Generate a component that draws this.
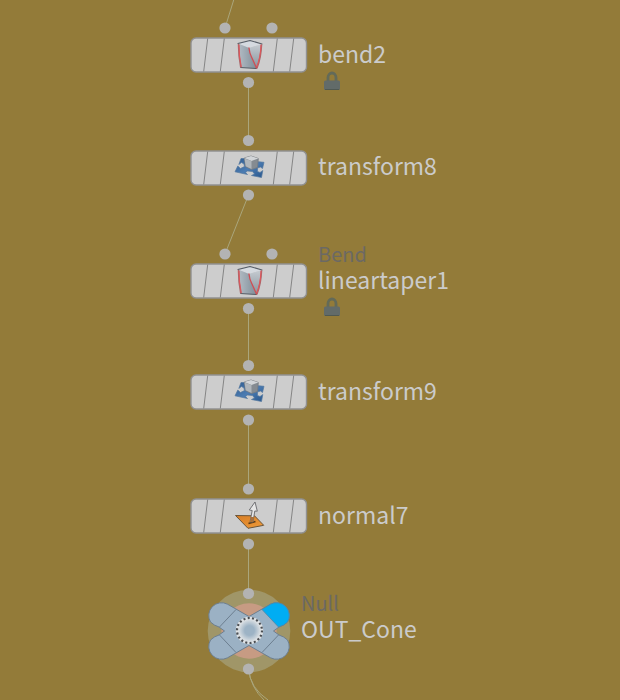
const wire = "#aaa67c";

function Lock() {
  return (
    <svg className="ml-[6px] block h-[20px] w-[16px]" viewBox="0 0 16 20" role="img" aria-label="locked">
      <path d="M4 11V6.500a4 4.500 0 0 1 8 0V11" fill="none" stroke="#636a58" strokeWidth="2.800" />
      <rect x="0" y="9.500" width="16" height="9.500" rx="1.500" fill="#626b69" />
      <path d="M1 18.500h14" stroke="#505952" />
    </svg>
  );
}

function BendIcon() {
  return (
    <g strokeLinejoin="round" strokeLinecap="round">
      <path d="M48 6.500L60 3.500L72 7L59 11Z" fill="#d5dae0" />
      <path d="M48 6.500L59 11L66.500 31.500L50.500 30.500Q48.500 18 48 6.500Z" fill="url(#bendLeft)" />
      <path d="M59 11L72 7Q71 22 66.500 31.500Q60 20 59 11Z" fill="url(#bendRight)" />
      <path d="M48 6.500L60 3.500L72 7M50.500 30.500L66.500 31.500" fill="none" stroke="#565d66" strokeWidth="1.100" />
      <path d="M48.500 7.500Q48.500 19 50.700 30" fill="none" stroke="#a8686c" strokeWidth="1.500" />
      <path d="M49 8Q49 19 51.200 29.500" fill="none" stroke="#e0565a" strokeWidth="1.100" />
      <path d="M71.500 8Q71 21 67 31" fill="none" stroke="#a8686c" strokeWidth="1.500" />
      <path d="M71 8Q70.500 21 66.500 30.500" fill="none" stroke="#e0565a" strokeWidth="1.100" />
      <path d="M59 11Q59.500 16 61.500 20L66.500 31" fill="none" stroke="#cf4d53" strokeWidth="1.300" />
    </g>
  );
}

function TransformIcon() {
  return (
    <g strokeLinejoin="round">
      <path
        d="M51 8.500L57 8.500L57 13L65 14L66 11.500L74 12.300L72.500 18.500L70.500 17L67.500 18L67.500 21.500L70 22.500L72.800 20.500L71.500 27.500L61.500 25.500L64.500 24L62.500 21.500L57.500 21L55.500 22.500L57.500 24.500L45 21.800L47.800 16L50.500 18.500L54.500 16.500L54 14L51.500 12.500L48.800 14.500Z"
        fill="url(#plate)"
        stroke="#55799f"
        strokeWidth="0.700"
      />
      <path d="M54.300 8L61 6L68.300 8.500L67.500 17.500L61.500 19.500L55.500 16.500Z" fill="#858b91" stroke="#767b80" strokeWidth="0.800" />
      <path d="M54.300 8L61 6L68.300 8.500L61.500 11Z" fill="#d2d5d8" />
      <path d="M54.500 8.500L61.500 11L61.500 19L55.700 16.200Z" fill="#b0b6bb" />
    </g>
  );
}

function NormalIcon() {
  return (
    <g strokeLinejoin="round">
      <path d="M45.500 17.500L64.500 17.800L73.700 27.300L58 30.300Z" fill="url(#orange)" stroke="#6b553a" strokeWidth="1" />
      <path d="M58.500 25.500L65.500 23.500" stroke="#5d3b14" strokeWidth="1.800" />
      <path d="M60 24L62.200 12.500L59.300 12L65 4L67.300 13.200L64.800 13L63 24Z" fill="#e6e6e6" stroke="#66676a" strokeWidth="0.900" />
      <path d="M60 24L60.800 19L64 19L63 24Z" fill="#a8703a" />
    </g>
  );
}

const glyphs = { bend: BendIcon, transform: TransformIcon, normal: NormalIcon };

function NodeTile({ kind }) {
  const Glyph = glyphs[kind];
  return (
    <svg className="block h-[36px] w-[118px] shrink-0" viewBox="0 0 118 36" role="img" aria-label={kind}>
      <rect x="1" y="1" width="115.500" height="34" rx="5" fill="#cdcdcd" stroke="#919191" strokeWidth="1.400" />
      <path d="M17.700 1.500L13.700 34.500M34.300 1.500L30.300 34.500M87.300 1.500L83.300 34.500M103.700 1.500L99.700 34.500" stroke="#858585" strokeWidth="1" />
      <Glyph />
    </svg>
  );
}

const nodes = [
  { name: "bend2", kind: "bend", locked: true, tile: "top-[37px]", label: "top-[40px]" },
  { name: "transform8", kind: "transform", tile: "top-[150px]", label: "top-[152px]" },
  { name: "lineartaper1", type: "Bend", kind: "bend", locked: true, tile: "top-[263px]", label: "top-[240px]" },
  { name: "transform9", kind: "transform", tile: "top-[374px]", label: "top-[377px]" },
  { name: "normal7", kind: "normal", tile: "top-[498px]", label: "top-[501px]" },
];

const ports = [
  [225, 28], [272, 28], [248.5, 82.5],
  [248.5, 140.5], [248.5, 195],
  [225, 254], [272, 254], [248.5, 308.5],
  [248.5, 365.5], [248.5, 420],
  [248.5, 489], [248.5, 544],
  [248.5, 593.5], [248.5, 669],
];

function Label({ type, name, locked }) {
  return (
    <div className="whitespace-nowrap">
      {type && <div className="h-[26px] text-[20px] leading-[27px] text-[#6b6964]">{type}</div>}
      <div className="h-[31px] text-[23px] leading-[26px] text-[#cbcbcb]">{name}</div>
      {locked && <Lock />}
    </div>
  );
}

function NullNode() {
  return (
    <svg className="block h-[84px] w-[84px]" viewBox="-42 -42 84 84" role="img" aria-label="null">
      <defs>
        <radialGradient id="core">
          <stop offset="0.350" stopColor="#9db3c5" />
          <stop offset="0.820" stopColor="#dde1e4" />
          <stop offset="1" stopColor="#dde1e4" />
        </radialGradient>
      </defs>
      <circle r="41.300" fill="#a09668" />
      <circle r="27.700" fill="#c79b83" />
      <path
        d="M0 -14.500L-21.500 -26.800A12.800 12.800 0 0 0 -38.500 -9Q-35 -5.500 -30 -4L-24.500 0L-30 4Q-35 5.500 -38.500 9A12.800 12.800 0 0 0 -21.500 26.800L0 14.500L21.500 26.800A12.800 12.800 0 0 0 38.500 9Q35 5.500 30 4L24.500 0L30 -4Q35 -5.500 38.500 -9A12.800 12.800 0 0 0 21.500 -26.800Z"
        fill="#9bb1c4"
        stroke="#6d7f90"
      />
      <path d="M13 -21.500L21.500 -26.800A12.800 12.800 0 0 1 38.500 -9Q35 -5.500 29.500 -4Z" fill="#00adf3" stroke="#4e86a6" strokeWidth="0.800" />
      <path d="M-13 -21.500L-29.500 -4M-13 21.500L-29.500 4M13 21.500L29.500 4" stroke="#6d7f90" />
      <circle cx="0.500" cy="-0.500" r="13.700" fill="url(#core)" />
      <circle cx="0.500" cy="-0.500" r="12.500" fill="none" stroke="#4a4e53" strokeWidth="2.200" strokeDasharray="2 2.363" />
    </svg>
  );
}

export default function App() {
  return (
    <main className="relative h-screen w-full overflow-hidden bg-[#937b39] font-['Noto_Sans_CJK_SC',sans-serif]">
      <svg className="absolute top-0 left-0 h-[700px] w-[620px]" viewBox="0 0 620 700" aria-hidden="true">
        <defs>
          <linearGradient id="bendLeft">
            <stop offset="0" stopColor="#b4bdc5" />
            <stop offset="1" stopColor="#7f8d98" />
          </linearGradient>
          <linearGradient id="bendRight" x1="0" y1="0" x2="0" y2="1">
            <stop offset="0" stopColor="#c6ccd2" />
            <stop offset="1" stopColor="#87939c" />
          </linearGradient>
          <linearGradient id="plate" x1="0" y1="0" x2="1" y2="1">
            <stop offset="0" stopColor="#2f5b8e" />
            <stop offset="0.500" stopColor="#4c7cb2" />
            <stop offset="1" stopColor="#28568c" />
          </linearGradient>
          <linearGradient id="orange" x1="0" y1="0" x2="1" y2="1">
            <stop offset="0" stopColor="#d77d24" />
            <stop offset="1" stopColor="#ef9b3b" />
          </linearGradient>
        </defs>
        <path
          d="M234 -1L225 28M248.500 82V141M248.500 195L225 254M248.500 308V366M248.500 420V489M248.500 544V594"
          fill="none"
          stroke={wire}
        />
      </svg>
      {nodes.map((n) => (
        <div key={n.name}>
          <div className={`absolute left-[190px] ${n.tile}`}>
            <NodeTile kind={n.kind} />
          </div>
          <div className={`absolute left-[318px] ${n.label}`}>
            <Label {...n} />
          </div>
        </div>
      ))}
      <div className="absolute top-[589px] left-[207px]">
        <NullNode />
      </div>
      <div className="absolute top-[589px] left-[301px]">
        <Label type="Null" name="OUT_Cone" />
      </div>
      <svg className="absolute top-0 left-0 h-[700px] w-[620px]" viewBox="0 0 620 700" aria-hidden="true">
        <path d="M248.500 669Q250 688 268 700M248.500 669Q251 688 264 700" fill="none" stroke={wire} />
        {ports.map(([x, y]) => (
          <circle key={`${x}-${y}`} cx={x} cy={y} r="5.600" fill="#b3b3b3" />
        ))}
      </svg>
    </main>
  );
}
